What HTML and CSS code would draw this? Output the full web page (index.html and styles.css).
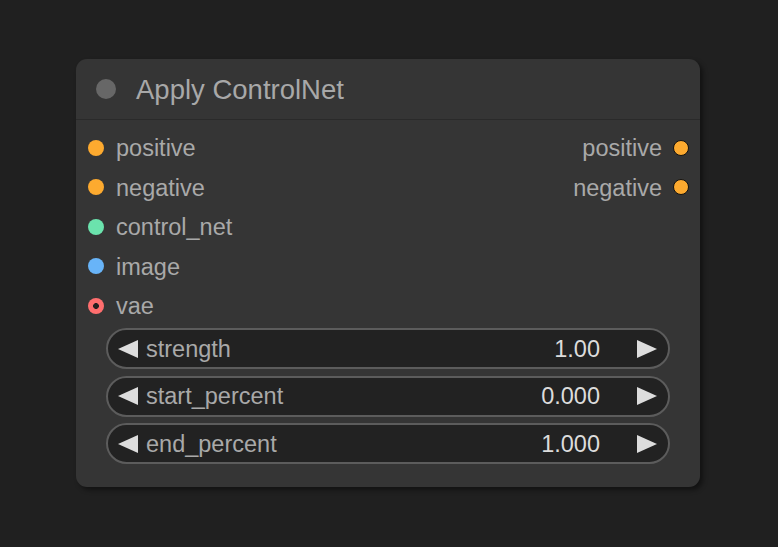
FILE: index.html
```html
<!DOCTYPE html>
<html>
<head>
<meta charset="utf-8">
<link rel="stylesheet" href="styles.css">
</head>
<body>
<div class="canvas">
  <div class="node">
    <div class="title">
      <span class="title-dot"></span>
      <span class="title-text">Apply ControlNet</span>
    </div>
    <div class="slots">
      <div class="inputs">
        <div class="slot"><span class="dot orange"></span><span class="label">positive</span></div>
        <div class="slot"><span class="dot orange"></span><span class="label">negative</span></div>
        <div class="slot"><span class="dot green"></span><span class="label">control_net</span></div>
        <div class="slot"><span class="dot blue"></span><span class="label">image</span></div>
        <div class="slot"><span class="dot red"></span><span class="label">vae</span></div>
      </div>
      <div class="outputs">
        <div class="slot out"><span class="label">positive</span><span class="dot orange outline"></span></div>
        <div class="slot out"><span class="label">negative</span><span class="dot orange outline"></span></div>
      </div>
    </div>
    <div class="widgets">
      <div class="widget">
        <svg class="arrow" width="20" height="18" viewBox="0 0 20 18"><polygon points="20,0 20,18 0,9" fill="#dddddd"/></svg>
        <span class="w-label">strength</span>
        <span class="w-value">1.00</span>
        <svg class="arrow right" width="20" height="18" viewBox="0 0 20 18"><polygon points="0,0 0,18 20,9" fill="#dddddd"/></svg>
      </div>
      <div class="widget">
        <svg class="arrow" width="20" height="18" viewBox="0 0 20 18"><polygon points="20,0 20,18 0,9" fill="#dddddd"/></svg>
        <span class="w-label">start_percent</span>
        <span class="w-value">0.000</span>
        <svg class="arrow right" width="20" height="18" viewBox="0 0 20 18"><polygon points="0,0 0,18 20,9" fill="#dddddd"/></svg>
      </div>
      <div class="widget">
        <svg class="arrow" width="20" height="18" viewBox="0 0 20 18"><polygon points="20,0 20,18 0,9" fill="#dddddd"/></svg>
        <span class="w-label">end_percent</span>
        <span class="w-value">1.000</span>
        <svg class="arrow right" width="20" height="18" viewBox="0 0 20 18"><polygon points="0,0 0,18 20,9" fill="#dddddd"/></svg>
      </div>
    </div>
  </div>
</div>
</body>
</html>
```
FILE: styles.css
```css
html, body {
  margin: 0;
  padding: 0;
  background: #202020;
  width: 778px;
  height: 547px;
  overflow: hidden;
  font-family: "Liberation Sans", Arial, sans-serif;
}
.canvas {
  padding: 59px 0 0 76px;
}
.node {
  width: 624px;
  height: 428px;
  box-sizing: border-box;
  background: #353535;
  border-radius: 11px;
  box-shadow: 3px 3px 5px rgba(0, 0, 0, 0.45);
  display: flex;
  flex-direction: column;
}
.title {
  height: 60px;
  border-bottom: 1px solid #2a2a2a;
  display: flex;
  align-items: center;
  padding-left: 20px;
  gap: 20px;
}
.title-dot {
  width: 20px;
  height: 20px;
  border-radius: 50%;
  background: #676767;
}
.title-text {
  font-size: 27.5px;
  color: #a8a8a8;
  line-height: 1;
  padding-top: 1px;
}
.slots {
  display: flex;
  justify-content: space-between;
  padding-top: 8px;
}
.inputs, .outputs {
  display: flex;
  flex-direction: column;
}
.slot {
  height: 39.5px;
  display: flex;
  align-items: center;
  gap: 12px;
  padding-left: 12px;
}
.slot.out {
  justify-content: flex-end;
  padding-left: 0;
  padding-right: 11px;
  gap: 11px;
}
.label {
  font-size: 23.5px;
  color: #a9a9a9;
  line-height: 1;
  padding-top: 2px;
}
.dot {
  width: 16px;
  height: 16px;
  border-radius: 50%;
  box-sizing: border-box;
  flex: none;
}
.orange { background: #fdaa2f; }
.green { background: #6be3ad; }
.blue { background: #68b4f8; }
.red { background: radial-gradient(circle, #262020 0 2.6px, #ff6e6e 3.2px); }
.outline { border: 1.5px solid #111; }
.widgets {
  display: flex;
  flex-direction: column;
  gap: 6.7px;
  padding: 2.5px 30px 0 30px;
}
.widget {
  height: 41px;
  box-sizing: border-box;
  border: 2px solid #5c5c5c;
  border-radius: 21px;
  background: #222222;
  display: flex;
  align-items: center;
  padding: 0 11px 0 10px;
}
.arrow {
  flex: none;
  display: block;
}
.w-label {
  font-size: 23.5px;
  color: #a9a9a9;
  margin-left: 8px;
  line-height: 1;
  padding-top: 2px;
}
.w-value {
  font-size: 23.5px;
  color: #dcdcdc;
  margin-left: auto;
  margin-right: 37px;
  line-height: 1;
  padding-top: 2px;
}
```
